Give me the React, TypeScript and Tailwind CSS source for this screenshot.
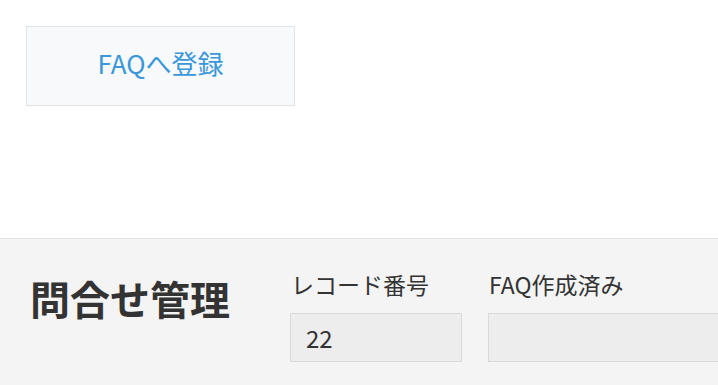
export default function App() {
  return (
    <div
      className="h-[385px] w-[718px] overflow-hidden bg-white"
      style={{ fontFamily: '"Noto Sans CJK JP", "Noto Sans", sans-serif' }}
    >
      {/* Action button */}
      <div className="px-[26px] pt-[26px]">
        <button
          type="button"
          className="flex h-[80px] w-[269px] items-center justify-center border border-[#e1e4e7] bg-[#f7f9fa] pb-[8px] text-[26px] text-[#3a97d9]"
        >
          FAQへ登録
        </button>
      </div>

      {/* Header panel */}
      <section className="mt-[132px] flex h-[200px] items-start border-t border-[#e2e2e2] bg-[#f4f4f4] pt-[34px]">
        <h1 className="ml-[30px] w-[260px] shrink-0 pt-[1px] text-[40px] font-bold leading-[48px] text-[#333]">
          問合せ管理
        </h1>
        <Field label="レコード番号" value="22" className="w-[172px] shrink-0" />
        <Field label="FAQ作成済み" value="" className="ml-[26px] w-[260px] shrink-0" />
      </section>
    </div>
  );
}

function Field({ label, value, className }: { label: string; value: string; className: string }) {
  return (
    <div className={className}>
      <p className="-mt-[4px] pb-[4px] pl-[1px] text-[23px] leading-[30px] text-[#333]">{label}</p>
      <div className="mt-[10px] flex h-[49px] items-center border border-[#d9d9d9] bg-[#ededed] px-[15px] text-[24px] text-[#333]">
        {value}
      </div>
    </div>
  );
}
